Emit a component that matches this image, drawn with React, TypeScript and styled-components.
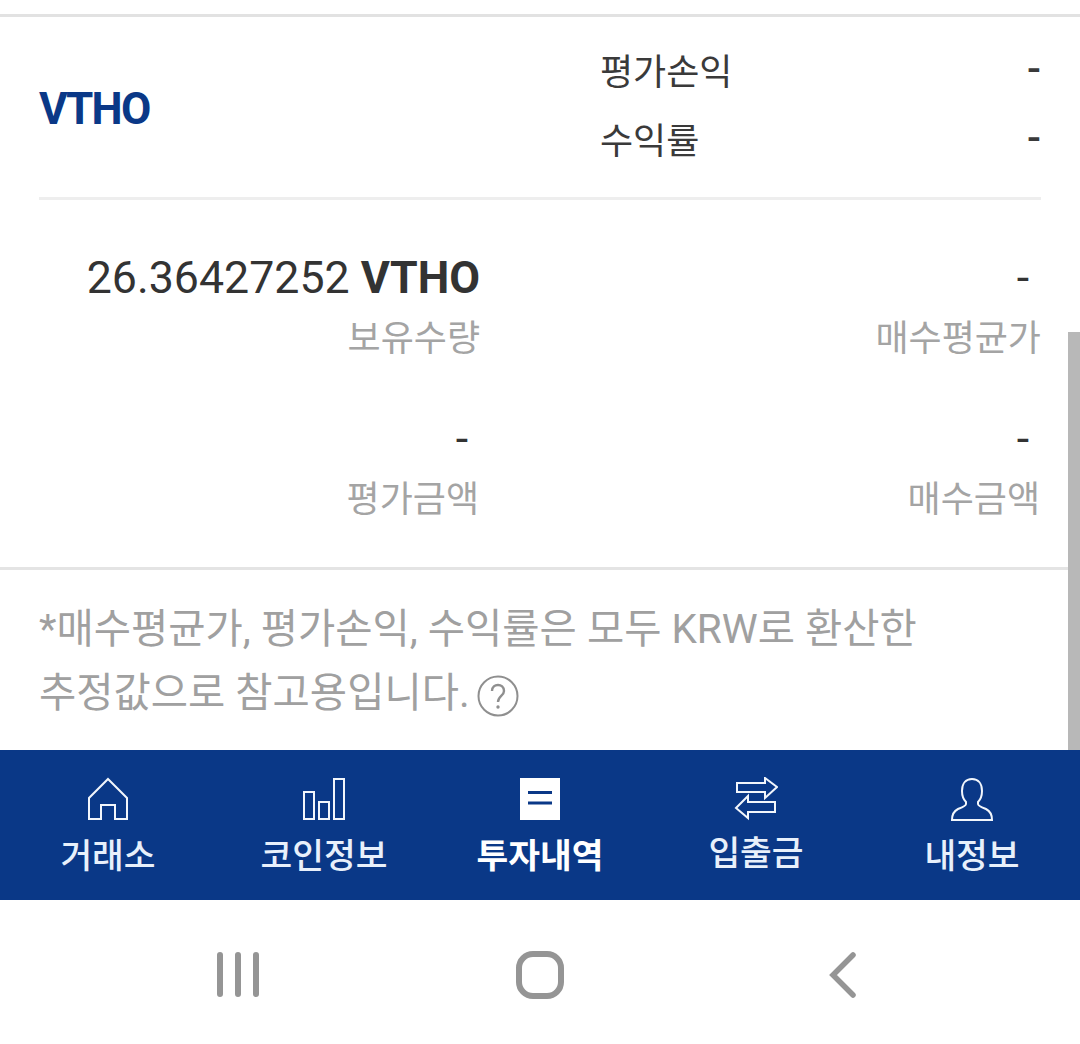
import styled, { createGlobalStyle } from "styled-components";

const GlobalStyle = createGlobalStyle`
  html, body {
    margin: 0;
    padding: 0;
    background: #fff;
  }
  body {
    font-family: Roboto, "Noto Sans CJK KR", sans-serif;
  }
`;

const Page = styled.div`
  position: relative;
  width: 1080px;
  height: 1044px;
  overflow: hidden;
  display: flex;
  flex-direction: column;
  background: #fff;
`;

const Content = styled.div`
  height: 750px;
  padding-top: 14px;
  box-sizing: border-box;
`;

const TopRule = styled.div`
  height: 3px;
  background: #e2e2e2;
`;

const Summary = styled.section`
  height: 183px;
  margin: 0 39px;
  box-sizing: border-box;
  border-bottom: 3px solid #eeeeee;
  display: flex;
  align-items: center;
`;

const CoinName = styled.h2`
  width: 561px;
  margin: 3px 0 0;
  font-size: 44px;
  font-weight: 700;
  letter-spacing: -1.7px;
  color: #0a3887;
  line-height: 50px;
`;

const SummaryRows = styled.div`
  flex: 1;
  display: flex;
  flex-direction: column;
  gap: 24px;
  margin-top: -8px;
`;

const SummaryRow = styled.div`
  display: flex;
  justify-content: space-between;
  align-items: center;
  height: 45px;
  font-size: 36px;
  color: #3a3a3a;

  b {
    font-size: 41px;
    font-weight: 500;
  }
`;

const Holdings = styled.section`
  height: 370px;
  box-sizing: border-box;
  border-bottom: 3px solid #e4e4e4;
  padding: 54px 39px 0 0;
  display: grid;
  grid-template-columns: 480px 1fr;
  grid-auto-rows: 161px;
  justify-items: end;
`;

const Stat = styled.div`
  display: flex;
  flex-direction: column;
  align-items: flex-end;
  gap: 14px;
`;

const StatValue = styled.div`
  height: 48px;
  line-height: 48px;
  font-size: 44.7px;
  color: #333;

  b {
    font-weight: 700;
  }
`;

const Dash = styled.span`
  padding-right: 12px;
`;

const StatLabel = styled.div<{ $inset?: number }>`
  height: 46px;
  line-height: 46px;
  font-size: 36px;
  padding-right: ${(props) => props.$inset ?? 1}px;
  color: #a4a4a4;
`;

const Note = styled.p`
  margin: 0;
  padding: 27px 39px 0;
  font-size: 40.5px;
  line-height: 64px;
  color: #a0a0a0;
`;

const HelpIcon = styled.svg`
  width: 42px;
  height: 42px;
  vertical-align: -10px;
  margin-left: 7px;
`;

const ScrollThumb = styled.div`
  position: absolute;
  top: 332px;
  right: 0;
  width: 12px;
  height: 418px;
  background: #b8b8b8;
`;

const TabBar = styled.nav`
  height: 150px;
  background: #0a3887;
  display: grid;
  grid-template-columns: repeat(5, 1fr);
`;

const Tab = styled.div<{ $active?: boolean; $raised?: boolean }>`
  display: flex;
  flex-direction: column;
  align-items: center;
  padding-top: 27px;
  color: ${(props) => (props.$active ? "#fff" : "#e8f0fb")};
  font-size: 34.5px;
  font-weight: ${(props) => (props.$active ? 700 : 500)};

  span {
    line-height: 44px;
    margin-top: ${(props) => (props.$raised ? "10px" : "13px")};
  }
`;

const TabIcon = styled.svg`
  width: 44px;
  height: 44px;
  display: block;
`;

const SystemBar = styled.div`
  flex: 1;
  display: grid;
  grid-template-columns: 476px 128px 1fr;
  padding-top: 49px;
  justify-items: center;
`;

const SystemIcon = styled.svg`
  width: 60px;
  height: 60px;
  display: block;
`;

const tabs = [
  {
    label: "거래소",
    icon: <path d="M22 2 L41 21 V42 H29 V28 H15 V42 H3 V21 Z" />,
  },
  {
    label: "코인정보",
    icon: (
      <>
        <rect x="2" y="15" width="10" height="27" />
        <rect x="17" y="25" width="10" height="17" />
        <rect x="32" y="2" width="10" height="40" />
      </>
    ),
  },
  {
    label: "투자내역",
    active: true,
    icon: (
      <>
        <rect x="2" y="1" width="40" height="42" fill="#fff" stroke="none" />
        <path d="M10 15.5 H34 M10 26 H34" stroke="#0a3887" strokeWidth="3" />
      </>
    ),
  },
  {
    label: "입출금",
    raised: true,
    icon: (
      <path d="M3 6 H31 V1 L43 10 L31 21 V15 H3 Z M41 25 H14 V19 L2 31 L14 41 V35 H41 Z" />
    ),
  },
  {
    label: "내정보",
    icon: (
      <path d="M22 2 C15.5 2 12 7 12 14 C12 19 14 23 16 25 V27 C16 29 13 30 8 32 C4 34 2 37 2 43 H42 C42 37 40 34 36 32 C31 30 28 29 28 27 V25 C30 23 32 19 32 14 C32 7 28.5 2 22 2 Z" />
    ),
  },
];

const App = () => {
  return (
    <Page>
      <GlobalStyle />
      <Content>
        <TopRule />
        <Summary>
          <CoinName>VTHO</CoinName>
          <SummaryRows>
            <SummaryRow>
              <span>평가손익</span>
              <b>-</b>
            </SummaryRow>
            <SummaryRow>
              <span>수익률</span>
              <b>-</b>
            </SummaryRow>
          </SummaryRows>
        </Summary>
        <Holdings>
          <Stat>
            <StatValue>
              26.36427252 <b>VTHO</b>
            </StatValue>
            <StatLabel $inset={0}>보유수량</StatLabel>
          </Stat>
          <Stat>
            <StatValue>
              <Dash>-</Dash>
            </StatValue>
            <StatLabel $inset={0}>매수평균가</StatLabel>
          </Stat>
          <Stat>
            <StatValue>
              <Dash>-</Dash>
            </StatValue>
            <StatLabel>평가금액</StatLabel>
          </Stat>
          <Stat>
            <StatValue>
              <Dash>-</Dash>
            </StatValue>
            <StatLabel>매수금액</StatLabel>
          </Stat>
        </Holdings>
        <Note>
          *매수평균가, 평가손익, 수익률은 모두 KRW로 환산한
          <br />
          추정값으로 참고용입니다.
          <HelpIcon viewBox="0 0 42 42">
            <circle cx="21" cy="21" r="19.5" fill="none" stroke="#8f8f8f" strokeWidth="2" />
            <path d="M15 16 C15 8 27 8 27 16 C27 21 21 21 21 27" fill="none" stroke="#8f8f8f" strokeWidth="2.4" />
            <circle cx="21" cy="32" r="1.7" fill="#8f8f8f" />
          </HelpIcon>
        </Note>
      </Content>
      <ScrollThumb />
      <TabBar>
        {tabs.map((tab) => (
          <Tab key={tab.label} $active={tab.active} $raised={tab.raised}>
            <TabIcon viewBox="0 0 44 44" fill="none" stroke="#f2f6fc" strokeWidth="2">
              {tab.icon}
            </TabIcon>
            <span>{tab.label}</span>
          </Tab>
        ))}
      </TabBar>
      <SystemBar>
        <SystemIcon viewBox="0 0 60 60" fill="none" stroke="#959595" strokeWidth="6" strokeLinecap="round">
          <path d="M12 6 V45 M30 6 V45 M48 6 V45" />
        </SystemIcon>
        <SystemIcon viewBox="0 0 60 60" fill="none" stroke="#959595" strokeWidth="6">
          <rect x="9" y="5" width="42" height="42" rx="14" />
        </SystemIcon>
        <SystemIcon viewBox="0 0 60 60" fill="none" stroke="#959595" strokeWidth="5.5" strokeLinecap="round">
          <path d="M41 6 L21 26 L41 46" />
        </SystemIcon>
      </SystemBar>
    </Page>
  );
};

export default App;
